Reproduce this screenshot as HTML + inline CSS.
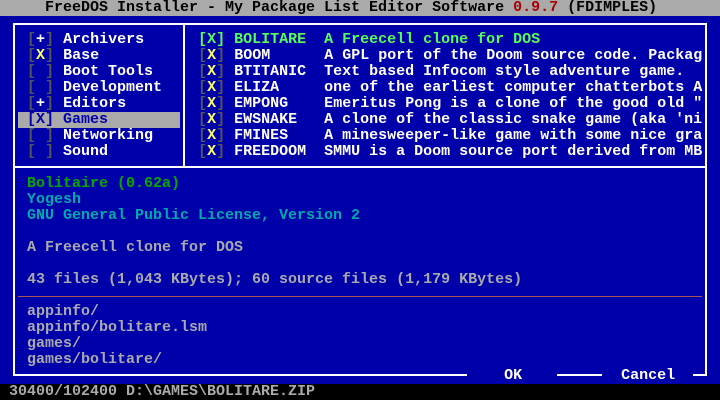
<!DOCTYPE html>
<html><head><meta charset="utf-8"><style>
*{margin:0;padding:0}
body{width:720px;height:400px;background:#0000aa;position:relative;overflow:hidden;font-family:"Liberation Mono",monospace;font-size:15px;font-weight:bold}
.r{position:absolute;left:0;height:16px;line-height:16px;white-space:pre;color:#aaa}
.l{position:absolute;background:#fff}
.w{color:#fff}.g{color:#aaa}.d{color:#555}.y{color:#ff5}.G{color:#5f5}.n{color:#0a0}.c{color:#0aa}.R{color:#a00}.k{color:#000}.b{color:#0000aa}
</style></head><body>
<div style="position:absolute;left:0;top:0;width:720px;height:16px;background:#aaa"></div>
<div style="position:absolute;left:0;top:384px;width:720px;height:16px;background:#000"></div>
<div style="position:absolute;left:18px;top:112px;width:162px;height:16px;background:#aaa"></div>
<!-- frame -->
<div class="l" style="left:13px;top:23px;width:694px;height:2px"></div>
<div class="l" style="left:13px;top:23px;width:2px;height:353px"></div>
<div class="l" style="left:705px;top:23px;width:2px;height:353px"></div>
<div class="l" style="left:183px;top:23px;width:2px;height:144px"></div>
<div class="l" style="left:13px;top:166px;width:694px;height:2px"></div>
<div style="position:absolute;left:18px;top:296px;width:684px;height:1px;background:#a55"></div>
<div class="l" style="left:13px;top:374px;width:454px;height:2px"></div>
<div class="l" style="left:557px;top:374px;width:45px;height:2px"></div>
<div class="l" style="left:693px;top:374px;width:14px;height:2px"></div>

<div class="r k" style="top:0">     FreeDOS Installer - My Package List Editor Software <span class="R">0.9.7</span> (FDIMPLES)</div>

<div class="r" style="top:32px">   <span class="d">[</span><span class="w">+</span><span class="d">]</span> <span class="w">Archivers</span>      <span class="G">[X] BOLITARE  A Freecell clone for DOS</span></div>
<div class="r" style="top:48px">   <span class="d">[</span><span class="y">X</span><span class="d">]</span> <span class="w">Base</span>           <span class="d">[</span><span class="y">X</span><span class="d">]</span> <span class="w">BOOM      A GPL port of the Doom source code. Packag</span></div>
<div class="r" style="top:64px">   <span class="d">[ ]</span> <span class="w">Boot Tools</span>     <span class="d">[</span><span class="y">X</span><span class="d">]</span> <span class="w">BTITANIC  Text based Infocom style adventure game.</span></div>
<div class="r" style="top:80px">   <span class="d">[ ]</span> <span class="w">Development</span>    <span class="d">[</span><span class="y">X</span><span class="d">]</span> <span class="w">ELIZA     one of the earliest computer chatterbots A</span></div>
<div class="r" style="top:96px">   <span class="d">[</span><span class="w">+</span><span class="d">]</span> <span class="w">Editors</span>        <span class="d">[</span><span class="y">X</span><span class="d">]</span> <span class="w">EMPONG    Emeritus Pong is a clone of the good old "</span></div>
<div class="r" style="top:112px">   <span class="b">[X] Games</span>          <span class="d">[</span><span class="y">X</span><span class="d">]</span> <span class="w">EWSNAKE   A clone of the classic snake game (aka 'ni</span></div>
<div class="r" style="top:128px">   <span class="d">[ ]</span> <span class="w">Networking</span>     <span class="d">[</span><span class="y">X</span><span class="d">]</span> <span class="w">FMINES    A minesweeper-like game with some nice gra</span></div>
<div class="r" style="top:144px">   <span class="d">[ ]</span> <span class="w">Sound</span>          <span class="d">[</span><span class="y">X</span><span class="d">]</span> <span class="w">FREEDOOM  SMMU is a Doom source port derived from MB</span></div>

<div class="r n" style="top:176px">   Bolitaire (0.62a)</div>
<div class="r c" style="top:192px">   Yogesh</div>
<div class="r c" style="top:208px">   GNU General Public License, Version 2</div>
<div class="r" style="top:240px">   A Freecell clone for DOS</div>
<div class="r" style="top:272px">   43 files (1,043 KBytes); 60 source files (1,179 KBytes)</div>
<div class="r" style="top:304px">   appinfo/</div>
<div class="r" style="top:320px">   appinfo/bolitare.lsm</div>
<div class="r" style="top:336px">   games/</div>
<div class="r" style="top:352px">   games/bolitare/</div>
<div class="r w" style="top:368px">                                                        OK           Cancel</div>
<div class="r" style="top:384px"> 30400/102400 D:\GAMES\BOLITARE.ZIP</div>
</body></html>
